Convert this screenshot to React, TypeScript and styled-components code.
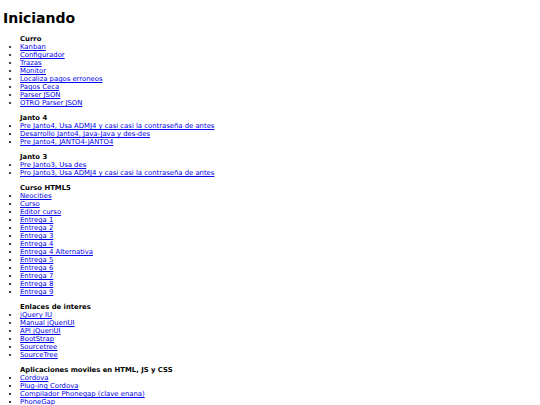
import React from "react";
import styled, { createGlobalStyle } from "styled-components";

const Global = createGlobalStyle`
  html, body { margin: 0; padding: 0; background: #ffffff; }
  body { font-family: "DejaVu Sans", sans-serif; color: #000; }
`;

const Page = styled.div`
  padding: 10px 3px 0 3px;
`;

const Title = styled.h1`
  font-size: 14px;
  font-weight: bold;
  line-height: 17px;
  margin: 0 0 8px 0;
`;

const Section = styled.section`
  margin: 0 0 7px 0;
`;

const Heading = styled.h3`
  font-size: 6.85px;
  font-weight: bold;
  line-height: 8px;
  margin: 0;
  padding-left: 17px;
`;

const List = styled.ul`
  margin: 0;
  padding-left: 17px;
  font-size: 6.85px;
  line-height: 8px;
`;

const Item = styled.li`
  list-style: disc;
`;

const Link = styled.a`
  color: #0000ee;
  text-decoration: underline;
`;

const sections: { title: string; items: string[] }[] = [
  {
    title: "Curro",
    items: [
      "Kanban",
      "Configurador",
      "Trazas",
      "Monitor",
      "Localiza pagos erroneos",
      "Pagos Ceca",
      "Parser JSON",
      "OTRO Parser JSON",
    ],
  },
  {
    title: "Janto 4",
    items: [
      "Pre Janto4, Usa ADMJ4 y casi casi la contraseña de antes",
      "Desarrollo Janto4, Java-Java y des-des",
      "Pre Janto4, JANTO4-JANTO4",
    ],
  },
  {
    title: "Janto 3",
    items: [
      "Pre Janto3, Usa des",
      "Pro Janto3, Usa ADMJ4 y casi casi la contraseña de antes",
    ],
  },
  {
    title: "Curso HTML5",
    items: [
      "Neocities",
      "Curso",
      "Editor curso",
      "Entrega 1",
      "Entrega 2",
      "Entrega 3",
      "Entrega 4",
      "Entrega 4 Alternativa",
      "Entrega 5",
      "Entrega 6",
      "Entrega 7",
      "Entrega 8",
      "Entrega 9",
    ],
  },
  {
    title: "Enlaces de interes",
    items: [
      "jQuery IU",
      "Manual jQueriUI",
      "API jQueriUI",
      "BootStrap",
      "Sourcetree",
      "SourceTree",
    ],
  },
  {
    title: "Aplicaciones moviles en HTML, JS y CSS",
    items: [
      "Cordova",
      "Plug-ing Cordova",
      "Compilador Phonegap (clave enana)",
      "PhoneGap",
    ],
  },
];

export default function App() {
  return (
    <>
      <Global />
      <Page>
        <Title>Iniciando</Title>
        {sections.map((s) => (
          <Section key={s.title}>
            <Heading>{s.title}</Heading>
            <List>
              {s.items.map((it) => (
                <Item key={it}>
                  <Link href="#">{it}</Link>
                </Item>
              ))}
            </List>
          </Section>
        ))}
      </Page>
    </>
  );
}
